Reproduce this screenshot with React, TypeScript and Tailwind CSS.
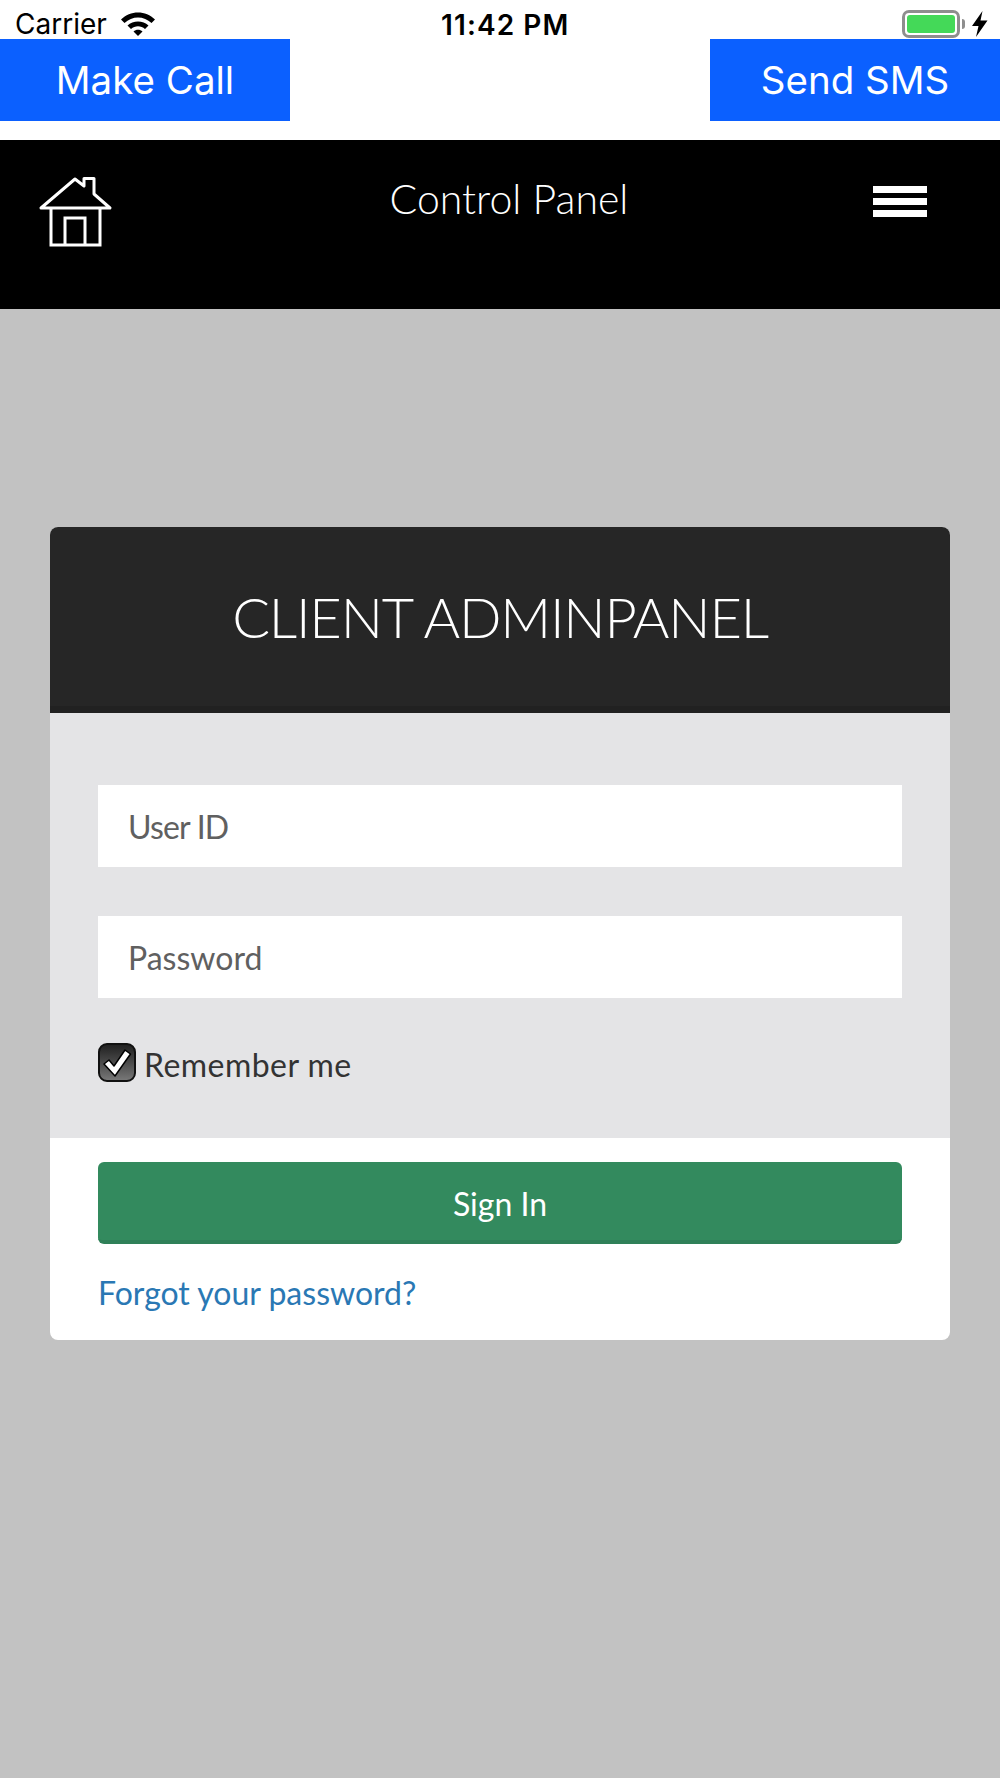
import React from 'react';

const bodyFont = "font-['Lato','Noto_Sans',sans-serif]";

const HomeIcon = () => (
  <svg width="74" height="72" viewBox="0 0 74 72" fill="none" stroke="white" strokeWidth="3" className="block">
    <path d="M2 32 L36 3 L45 10 V2.500 H55 V18 L71 32 Z" strokeLinejoin="round" />
    <path d="M12 32 V69 H61 V32" />
    <path d="M26 69 V42 H46 V69" />
  </svg>
);

const WifiIcon = () => (
  <svg width="34" height="24" viewBox="0 0 34 24" fill="black" className="block">
    <path d="M0 7.500 C9 -2 25 -2 34 7.500 L30.500 11 C23 3.500 11 3.500 3.500 11 Z" />
    <path d="M6.500 13.500 C12 8 22 8 27.500 13.500 L24 17 C20 13.200 14 13.200 10 17 Z" />
    <path d="M12.500 19.500 C15 17 19 17 21.500 19.500 L17 24 Z" />
  </svg>
);

const BoltIcon = () => (
  <svg width="16" height="26" viewBox="0 0 16 26" fill="black" className="block">
    <path d="M10.500 0 L0 15 H6.500 L4 26 L15.500 9.500 H8.500 Z" />
  </svg>
);

const Battery = () => (
  <div className="flex items-center gap-[2px]">
    <div className="w-[58px] h-[28px] rounded-[7px] border-[3px] border-[#8e8e8e] p-[2px]">
      <div className="h-full w-full rounded-[3px] bg-[#44d958]" />
    </div>
    <div className="w-[3px] h-[10px] rounded-r-full bg-[#8e8e8e]" />
  </div>
);

const StatusBar = () => (
  <div className="relative h-[39px] flex items-center justify-between pl-[15px] pr-[12px] pt-[9px] font-['Inter',sans-serif] text-black bg-white">
    <div className="flex items-center gap-[14px]">
      <span className="text-[28px] leading-none">Carrier</span>
      <WifiIcon />
    </div>
    <span className="absolute left-[441px] top-[11px] text-[28px] leading-none font-semibold tracking-[1.100px]">11:42 PM</span>
    <div className="flex items-center gap-[7px]">
      <Battery />
      <BoltIcon />
    </div>
  </div>
);

const BlueButton = ({ label }: { label: string }) => (
  <button className="w-[290px] h-[82px] bg-[#0b60ff] text-white text-[38.500px] font-['Inter',sans-serif] leading-none">
    {label}
  </button>
);

const Field = ({ placeholder, extra }: { placeholder: string; extra?: string }) => (
  <input
    placeholder={placeholder}
    className={`block w-full h-[82px] bg-white px-[30px] text-[32px] text-[#555] placeholder:text-[#606060] outline-none ${bodyFont} ${extra ?? ''}`}
  />
);

const RememberCheck = () => (
  <div className="w-[38px] h-[39px] rounded-[9px] border-[2px] border-[#111] bg-gradient-to-b from-[#222] to-[#777] flex items-center justify-center">
    <svg width="30" height="30" viewBox="0 0 30 30" fill="white" stroke="black" strokeWidth="1.500">
      <path d="M2 16 L7 12 L12 18 L23 2 L28.500 6 L13 28 Z" strokeLinejoin="round" />
    </svg>
  </div>
);

export default function App() {
  return (
    <div className="w-[1000px] h-[1778px] flex flex-col bg-[#c2c2c2] overflow-hidden">
      <div className="bg-white">
        <StatusBar />
        <div className="flex justify-between">
          <BlueButton label="Make Call" />
          <BlueButton label="Send SMS" />
        </div>
        <div className="h-[19px]" />
      </div>

      <header className="relative h-[169px] shrink-0 bg-black flex justify-center pt-[33px] pl-[18px]">
        <div className="absolute left-[39px] top-[36px]">
          <HomeIcon />
        </div>
        <h1 className={`text-[41px] leading-[52px] font-light text-white ${bodyFont}`}>Control Panel</h1>
        <div className="absolute right-[73px] top-[46px] w-[54px] flex flex-col gap-[5px]">
          <div className="h-[7px] bg-white" />
          <div className="h-[7px] bg-white" />
          <div className="h-[7px] bg-white" />
        </div>
      </header>

      <main className="flex-1 pt-[218px] px-[50px]">
        <div className="rounded-[8px] overflow-hidden bg-white">
          <div className="h-[186px] bg-[#262626] border-b-[7px] border-[#212121] flex items-center justify-center">
            <h2 className={`text-[56px] leading-none font-light tracking-[-1.200px] text-white ${bodyFont}`}>CLIENT ADMINPANEL</h2>
          </div>
          <div className="bg-[#e4e4e6] px-[48px] pt-[72px] h-[425px]">
            <div className="flex flex-col gap-[49px]">
              <Field placeholder="User ID" extra="tracking-[-0.800px]" />
              <Field placeholder="Password" />
            </div>
            <div className="flex items-center gap-[8px] mt-[45px]">
              <RememberCheck />
              <span className={`pt-[5px] text-[32px] leading-none tracking-[0.450px] text-[#333] ${bodyFont}`}>Remember me</span>
            </div>
          </div>
          <div className="px-[48px] pt-[24px] h-[202px]">
            <button className={`block w-full h-[82px] pt-[6px] rounded-[6px] bg-[#338a5e] border-b-[4px] border-[#2f8058] text-white text-[32px] ${bodyFont}`}>
              Sign In
            </button>
            <a className={`block mt-[29px] text-[32px] leading-[40px] text-[#2a78b4] ${bodyFont}`}>Forgot your password?</a>
          </div>
        </div>
      </main>
    </div>
  );
}
